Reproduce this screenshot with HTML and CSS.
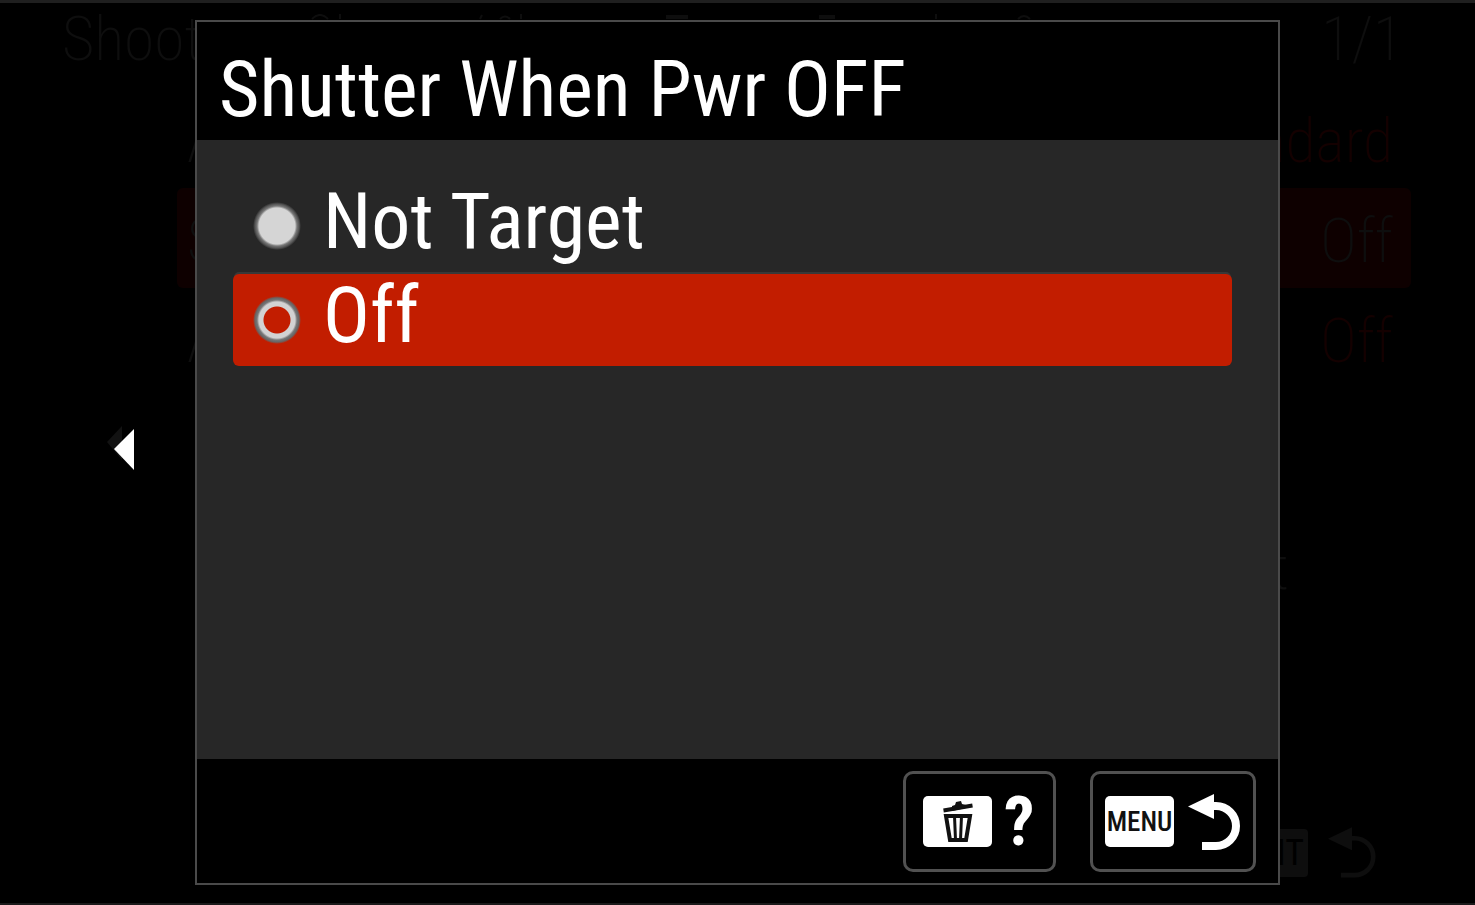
FILE: index.html
```html
<!DOCTYPE html>
<html lang="en">
<head>
<meta charset="utf-8">
<meta name="viewport" content="width=device-width, initial-scale=1">
<title>Shutter When Pwr OFF</title>
<link rel="stylesheet" href="styles.css">
</head>
<body>
<div class="screen">
  <div class="menu" aria-hidden="true">
    <header class="menu-head"><span>Shoot</span><span>1/1</span></header>
    <svg class="menu-traces" viewBox="0 0 1084 6" preserveAspectRatio="none">
      <path d="M116 5q8-8 16 0M144 0v5M284 5l2-4M304 5q5-5 10 0M325 0v5M470 2h22M470 4h22M623 2h16M623 4h16M740 0v5M822 5q6-6 12 0"/>
    </svg>
    <div class="menu-rows">
      <div class="menu-row"><span>A</span><span class="value">Standard</span></div>
      <div class="menu-row current"><span>S</span><span>Off</span></div>
      <div class="menu-row"><span>A</span><span class="value">Off</span></div>
    </div>
    <div class="menu-hint">t</div>
    <div class="menu-foot">
      <span class="ghost-key">EXIT</span>
      <svg class="ghost-back" viewBox="0 0 52 56"><path class="line" d="M24 12h5a20 20 0 0 1 0 40H14"/><path class="head" d="M0 12.500 26 0v25z"/></svg>
    </div>
  </div>

  <div class="overlay">
    <button class="prev" type="button" aria-label="Previous">
      <svg viewBox="0 0 28 44"><path class="shade" d="M0 16 15 0v34z"/><path class="arrow" d="M7 23 27 3v41z"/></svg>
    </button>
    <main class="dialog" role="dialog" aria-labelledby="title">
      <h1 class="title" id="title">Shutter When Pwr OFF</h1>
      <form class="options">
        <label class="option" for="not-target">
          <input class="radio" type="radio" name="shutter" id="not-target">
          <span class="option-text">Not Target</span>
        </label>
        <label class="option" for="off">
          <input class="radio" type="radio" name="shutter" id="off" checked>
          <span class="option-text">Off</span>
        </label>
      </form>
      <footer class="actions">
        <button class="action help" type="button" aria-label="Delete key: help">
          <span class="key">
            <svg class="trash" viewBox="0 0 32 42"><path class="lid" d="M1.500 9.500 30.500 4.500"/><path class="knob" d="M10 5 13 4 14 1l5-1 1 3 4 1v3l-14 3z"/><path class="can" d="M4 15h24l-4 24H8z"/><path class="rib" d="M12.500 15l1 24M19.500 15l-1 24"/></svg>
          </span>
          <span class="question">?</span>
        </button>
        <button class="action back" type="button" aria-label="Menu key: back">
          <span class="key">MENU</span>
          <svg class="return" viewBox="0 0 52 56"><path class="line" d="M24 12h4a20 20 0 0 1 0 40H14"/><path class="head" d="M0 12.500 26 0v25z"/></svg>
        </button>
      </footer>
    </main>
  </div>
</div>
</body>
</html>
```
FILE: styles.css
```css
* { box-sizing: border-box; }

body {
  margin: 0;
  background: #000;
  color: #fff;
  font-family: "Roboto Condensed", "Liberation Sans Narrow", "Arial Narrow", sans-serif;
}

button {
  margin: 0;
  background: none;
  color: inherit;
  font: inherit;
}

svg { display: block; }

.screen {
  display: grid;
  min-height: 100vh;
  border-top: 3px solid #1f1f1f;
  border-bottom: 2px solid #1a1a1a;
}

.menu, .overlay { grid-area: 1 / 1; }

/* Dimmed menu behind the dialog */
.menu {
  position: relative;
  display: flex;
  flex-direction: column;
  padding: 0 64px 24px 62px;
  color: #0e0e0e;
  font-size: 62px;
  font-weight: 200;
  line-height: 72px;
}

.menu-head {
  display: flex;
  justify-content: space-between;
  padding-right: 8px;
}

.menu-traces {
  position: absolute;
  top: 11px;
  left: 196px;
  width: calc(100% - 391px);
  height: 6px;
  fill: none;
  stroke: #0e0e0e;
  stroke-width: 2;
}

.menu-rows {
  margin: 13px 0 0 115px;
}

.menu-row {
  display: flex;
  align-items: center;
  justify-content: space-between;
  height: 100px;
  padding: 6px 18px 0 10px;
  border-radius: 6px;
}

.menu-row .value { color: #140000; }

.menu-row.current { background: #0e0000; }

.menu-hint {
  margin: 144px 122px 0 0;
  text-align: right;
}

.menu-foot {
  display: flex;
  align-items: center;
  justify-content: flex-end;
  gap: 20px;
  margin-top: auto;
  padding-right: 35px;
}

.ghost-key {
  padding: 0 4px;
  border-radius: 4px;
  background: #0e0e0e;
  color: #000;
  font-size: 36px;
  font-weight: 400;
  line-height: 48px;
}

.ghost-back {
  width: 48px;
  height: 52px;
}

.line { fill: none; stroke: currentColor; stroke-width: 8; }
.head { fill: currentColor; }
.ghost-back { color: #0e0e0e; }
.ghost-back .line { stroke-width: 5; }

/* Dialog layer */
.overlay {
  z-index: 1;
  display: grid;
  grid-template-columns: 195px 1fr 195px;
  padding: 17px 0 18px;
}

.prev {
  align-self: center;
  justify-self: end;
  margin: 0 60px 10px 0;
  padding: 0;
  border: 0;
}

.prev svg { width: 28px; height: 44px; }
.shade { fill: #121212; }
.arrow { fill: #fff; }

.dialog {
  display: flex;
  flex-direction: column;
  border: 2px solid #4a4a4a;
  background: #000;
}

.title {
  margin: 0;
  padding: 20px 22px 2px;
  font-size: 78px;
  font-weight: 400;
  line-height: 96px;
}

.options {
  flex: 1;
  padding: 40px 46px 0 36px;
  background: #272727;
}

.option {
  display: flex;
  align-items: center;
  gap: 22px;
  height: 92px;
  padding-left: 20px;
  border-radius: 6px;
}

.option + .option {
  margin-top: 2px;
  background: #c21d00;
  box-shadow: 0 -3px 0 -1px #383838;
}

.option-text {
  padding-bottom: 8px;
  font-size: 78px;
  line-height: 82px;
}

.radio {
  appearance: none;
  width: 48px;
  height: 48px;
  margin: 0;
  border-radius: 50%;
  background: radial-gradient(circle closest-side, #d5d5d5 18px, #777 20px, #555 22px, #272727 24px);
}

.radio:checked {
  background: radial-gradient(circle closest-side, #c21d00 13px, #d2d2d2 14px, #d2d2d2 18px, #777 20px, #666 22px, #c21d00 24px);
}

.actions {
  display: flex;
  justify-content: flex-end;
  gap: 34px;
  padding: 12px 22px 11px;
}

.action {
  display: flex;
  align-items: center;
  height: 101px;
  border: 3px solid #515151;
  border-radius: 10px;
}

.help { gap: 12px; min-width: 153px; padding: 0 17px; }
.back { gap: 14px; padding: 0 13px 0 12px; }

.key {
  display: grid;
  place-items: center;
  width: 69px;
  height: 51px;
  border-radius: 5px;
  background: #fff;
  color: #111;
  font-size: 27px;
  font-weight: 500;
}

.trash { width: 32px; height: 42px; }
.trash path { fill: none; stroke: #111; stroke-width: 4; }
.trash .knob { fill: #111; stroke: none; }
.trash .rib { stroke-width: 3; }

.question {
  font-size: 68px;
  font-weight: 700;
  line-height: 72px;
}

.return { width: 52px; height: 56px; }
```
